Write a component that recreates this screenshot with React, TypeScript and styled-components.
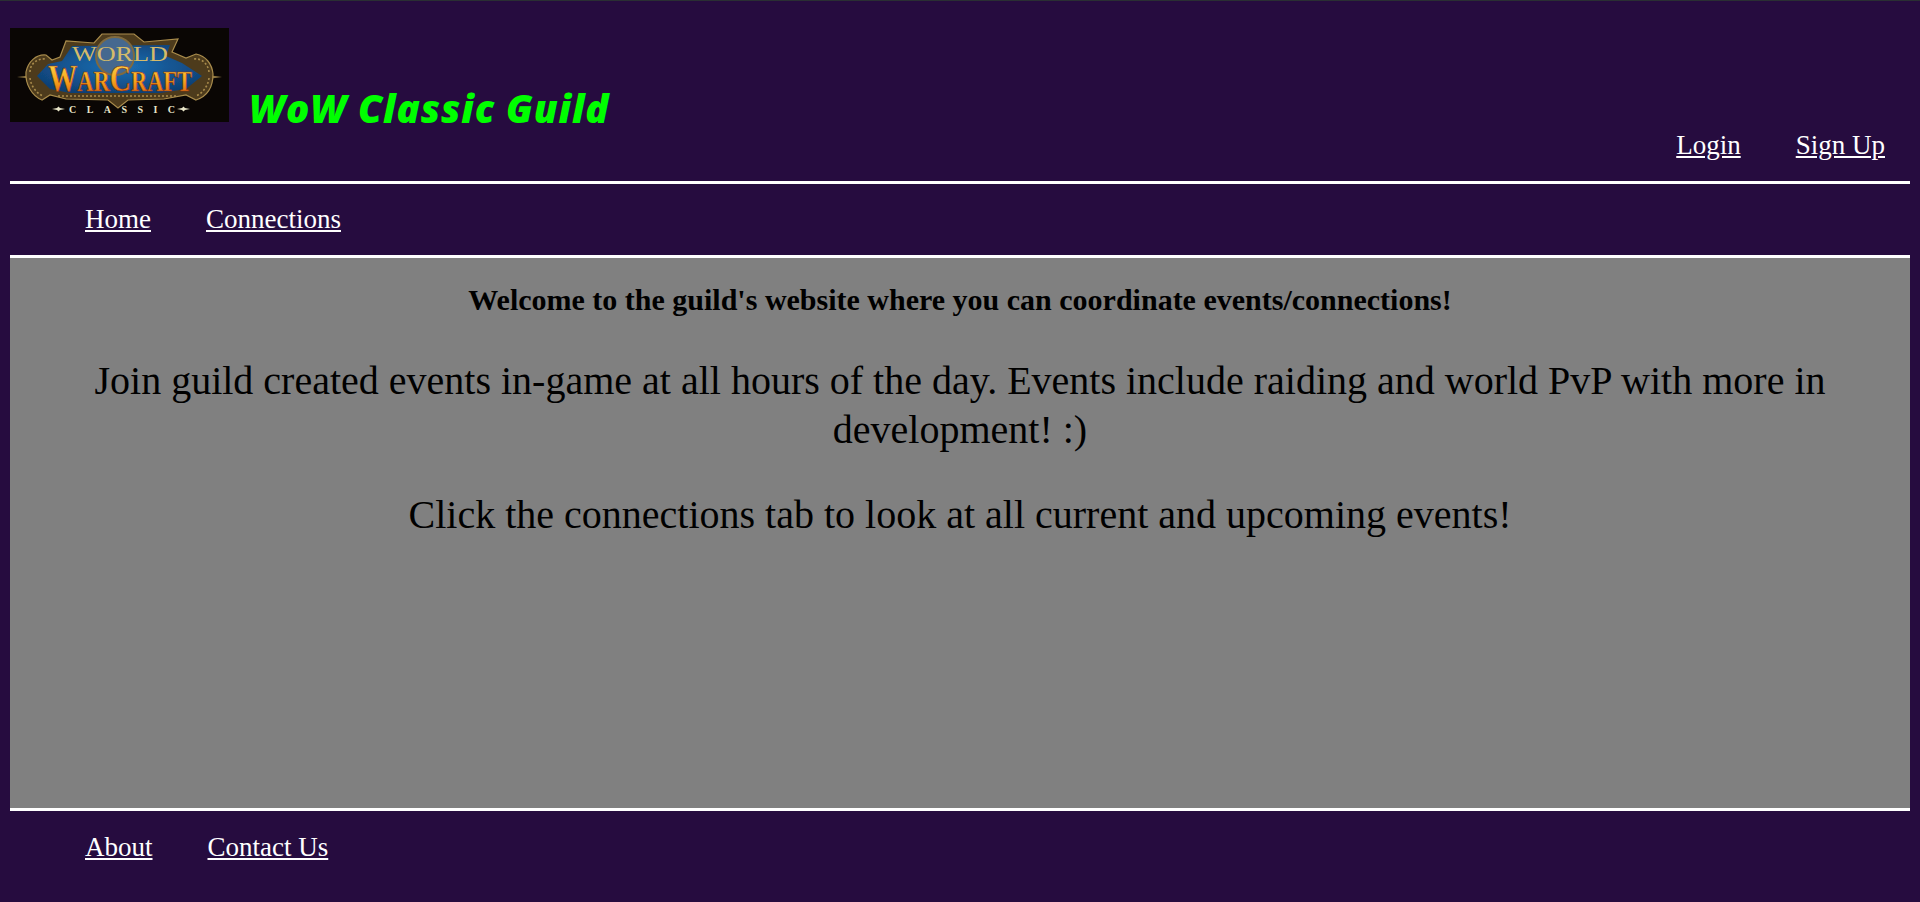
import React from "react";
import styled, { createGlobalStyle } from "styled-components";

const GlobalStyle = createGlobalStyle`
  html, body {
    margin: 0;
    padding: 0;
    background: #260c3f;
  }
  body {
    font-family: "Liberation Serif", "Times New Roman", serif;
    border-top: 1px solid #2a2f33;
  }
  a {
    color: #fff;
  }
`;

const Page = styled.div`
  padding: 0 10px;
  min-height: 901px;
  box-sizing: border-box;
  display: flex;
  flex-direction: column;
`;

const Header = styled.header`
  display: flex;
  align-items: flex-start;
  height: 180px;
  border-bottom: 3px solid #fff;
`;

const Brand = styled.div`
  display: flex;
  align-items: flex-end;
  margin-top: 27px;
  flex-grow: 1;
`;

const Logo = styled.svg`
  display: block;
  width: 219px;
  height: 94px;
`;

const Title = styled.h1`
  margin: 0 0 -11px 20px;
  color: #00ff00;
  font-family: "Open Sans", sans-serif;
  font-style: italic;
  font-weight: 800;
  font-size: 38.5px;
  letter-spacing: 0.9px;
  line-height: 50px;
`;

const AuthLinks = styled.nav`
  display: flex;
  gap: 55px;
  align-self: flex-end;
  padding: 0 25px 20px 0;
`;

const NavLink = styled.a`
  font-size: 27px;
  line-height: 31px;
`;

const NavBar = styled.nav`
  display: flex;
  gap: 55px;
  padding: 0 75px;
  height: 71px;
  align-items: center;
  border-bottom: 3px solid #fff;
`;

const Main = styled.main`
  height: 550px;
  background: #808080;
  border-bottom: 3px solid #fff;
  text-align: center;
  color: #000;
`;

const Welcome = styled.h3`
  margin: 0;
  padding: 25px 0 4px;
  font-size: 30px;
  line-height: 33px;
`;

const Blurb = styled.p`
  margin: 36px 0 0;
  font-size: 40px;
  line-height: 49px;
`;

const Footer = styled.footer`
  display: flex;
  gap: 55px;
  padding: 21px 75px 0;
`;

const WowLogo = () => (
  <Logo viewBox="0 0 219 94">
    <defs>
      <linearGradient id="letters" x1="0" y1="0" x2="0" y2="1">
        <stop offset="0" stopColor="#ffe45c" />
        <stop offset="0.55" stopColor="#f6a81c" />
        <stop offset="1" stopColor="#d9500f" />
      </linearGradient>
      <radialGradient id="banner" cx="0.5" cy="0.45" r="0.6">
        <stop offset="0" stopColor="#1c70b6" />
        <stop offset="1" stopColor="#0f3f73" />
      </radialGradient>
      <filter id="soft">
        <feGaussianBlur stdDeviation="0.4" />
      </filter>
    </defs>
    <rect width="219" height="94" fill="#0a0604" />
    <g filter="url(#soft)">
      <path d="M7 49 L24 47 L198 47 L212 49 L198 51 L24 51 Z" fill="#8d7540" />
      <path
        d="M16 44 C18 34 26 26 36 27 L42 32 L50 29 L56 13 L84 15 L92 6 L124 6 L134 14 L168 11 L162 24 L176 30 L186 26 C196 28 202 36 203 46 C203 58 198 68 186 72 L176 67 L154 71 L118 72 L108 80 L98 72 L56 71 L40 67 L32 72 C22 68 15 56 16 44 Z"
        fill="#4d3a1c"
        stroke="#a98c4c"
        strokeWidth="1.2"
      />
      <path
        d="M27 48 L38 36 L52 33 L62 18 L160 17 L156 28 L172 35 L192 48 L176 61 L150 65 L60 65 L40 61 Z"
        fill="url(#banner)"
      />
      <circle cx="105" cy="28" r="19" fill="#44688f" stroke="#7f6a3f" strokeWidth="2" />
      <g fill="none" stroke="#a98c4c" strokeWidth="1.6" strokeDasharray="2 2">
        <path d="M20 44 C20 36 27 30 36 31 M20 50 C21 58 26 65 33 68" />
        <path d="M199 44 C198 36 192 30 184 31 M199 50 C198 58 193 65 186 68" />
        <path d="M48 68 L168 68" />
      </g>
    </g>
    <text
      x="62"
      y="33"
      fontFamily="Liberation Serif, serif"
      fontSize="20"
      textLength="96"
      lengthAdjust="spacingAndGlyphs"
      fill="#d4bb6a"
    >
      WORLD
    </text>
    <text
      x="38"
      y="63"
      fontFamily="Liberation Serif, serif"
      fontWeight="700"
      textLength="144"
      lengthAdjust="spacingAndGlyphs"
      fill="url(#letters)"
      stroke="#8f2c0c"
      strokeWidth="0.6"
    >
      <tspan fontSize="38">W</tspan>
      <tspan fontSize="29">AR</tspan>
      <tspan fontSize="38">C</tspan>
      <tspan fontSize="29">RAFT</tspan>
    </text>
    <path d="M42 81 L47 80 L48.5 78.5 L50 80 L55 81 L50 82 L48.5 83.5 L47 82 Z" fill="#e8e5c8" />
    <path d="M167 81 L172 80 L173.5 78.5 L175 80 L180 81 L175 82 L173.5 83.5 L172 82 Z" fill="#e8e5c8" />
    <text
      x="59"
      y="85"
      fontFamily="Liberation Serif, serif"
      fontWeight="700"
      fontSize="10"
      textLength="106"
      fill="#e8e5c8"
    >
      CLASSIC
    </text>
  </Logo>
);

const App = () => (
  <>
    <GlobalStyle />
    <Page>
      <Header>
        <Brand>
          <WowLogo />
          <Title>WoW Classic Guild</Title>
        </Brand>
        <AuthLinks>
          <NavLink href="#">Login</NavLink>
          <NavLink href="#">Sign Up</NavLink>
        </AuthLinks>
      </Header>
      <NavBar>
        <NavLink href="#">Home</NavLink>
        <NavLink href="#">Connections</NavLink>
      </NavBar>
      <Main>
        <Welcome>Welcome to the guild's website where you can coordinate events/connections!</Welcome>
        <Blurb>Join guild created events in-game at all hours of the day. Events include raiding and world PvP with more in development! :)</Blurb>
        <Blurb>Click the connections tab to look at all current and upcoming events!</Blurb>
      </Main>
      <Footer>
        <NavLink href="#">About</NavLink>
        <NavLink href="#">Contact Us</NavLink>
      </Footer>
    </Page>
  </>
);

export default App;
